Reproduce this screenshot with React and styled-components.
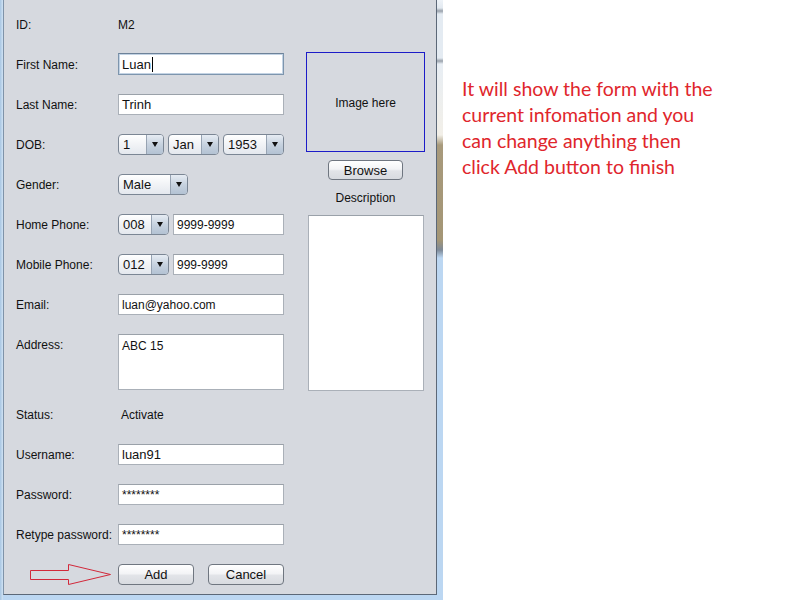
import React from "react";
import styled, { createGlobalStyle } from "styled-components";

const Global = createGlobalStyle`
  html, body { margin: 0; padding: 0; background: #fff; }
  body { font-family: "Liberation Sans", Arial, sans-serif; font-size: 12px; color: #111; }
`;

const Page = styled.div`
  display: flex;
  width: 800px;
  height: 600px;
  background: #fff;
  overflow: hidden;
`;

const Frame = styled.div`
  box-sizing: border-box;
  width: 443px;
  height: 600px;
  display: flex;
  padding: 0 6px 5px 3px;
  background:
    linear-gradient(to bottom, #eef3f8 0, #e2e9f0 8px, #9aa2ac 11px, #e4ebf2 14px, #e4ebf2 58px, #9aa2ac 61px, #e8eef4 64px, #f2efe8 135px, #a89a7c 145px, #a49676 240px, #7e8a98 250px, #bcd7f2 258px, #bcd7f2 100%) right top / 6px 100% no-repeat,
    linear-gradient(to right, #a8c6e2, #cfe2f4) left top / 3px 100% no-repeat,
    #bcd7f2;
`;

const Panel = styled.div`
  flex: 1;
  display: flex;
  box-sizing: border-box;
  background: #d6d9df;
  border-left: 1px solid #7f93a8;
  border-right: 1px solid #5c6878;
  border-bottom: 1px solid #5c6878;
  padding: 4px 0 0 12px;
`;

const FormCol = styled.div`
  display: flex;
  flex-direction: column;
  width: 268px;
`;

const Row = styled.div`
  display: flex;
  align-items: ${(p) => (p.$top ? "flex-start" : "center")};
  height: ${(p) => p.$h || 40}px;
  box-sizing: border-box;
  padding-top: ${(p) => (p.$top ? 10 : 0)}px;
`;

const Label = styled.div`
  width: 102px;
  flex: none;
  line-height: 14px;
  padding-top: ${(p) => (p.$top ? 4 : 2)}px;
`;

const Value = styled.div`
  padding-left: ${(p) => p.$pad || 0}px;
  padding-top: 2px;
  line-height: 14px;
`;

const Controls = styled.div`
  display: flex;
  gap: 4px;
  width: 166px;
`;

const Input = styled.div`
  box-sizing: border-box;
  width: ${(p) => p.$w || 166}px;
  height: ${(p) => p.$h || 21}px;
  background: #fff;
  border: 1px solid ${(p) => (p.$focus ? "#7d95ad" : "#aab0b8")};
  border-top-color: ${(p) => (p.$focus ? "#6d8299" : "#9aa1a9")};
  box-shadow: ${(p) => (p.$focus ? "inset 0 0 0 1px #c3d3e4" : "none")};
  padding: ${(p) => (p.$multi ? "4px 3px" : "1px 3px 0")};
  display: flex;
  align-items: ${(p) => (p.$multi ? "flex-start" : "center")};
  font-size: ${(p) => (p.$big ? 13 : 12)}px;
  line-height: 14px;
  color: #111;
`;

const Caret = styled.span`
  display: inline-block;
  width: 1px;
  height: 15px;
  background: #000;
  margin-left: 1px;
`;

const Combo = styled.div`
  box-sizing: border-box;
  width: ${(p) => p.$w}px;
  height: 21px;
  flex: none;
  display: flex;
  border: 1px solid #7b8694;
  border-radius: 4px;
  overflow: hidden;
  background: linear-gradient(to bottom, #ffffff, #f1f3f6 50%, #e4e8ee);
`;

const ComboText = styled.div`
  flex: 1;
  display: flex;
  align-items: center;
  padding: 1px 0 0 4px;
  font-size: 13px;
`;

const ComboArrow = styled.div`
  width: 16px;
  flex: none;
  border-left: 1px solid #97a3b2;
  background: linear-gradient(to bottom, #e6ecf3, #c7d2df 50%, #b3c2d3);
  display: flex;
  align-items: center;
  justify-content: center;
  &::after {
    content: "";
    border-left: 3.5px solid transparent;
    border-right: 3.5px solid transparent;
    border-top: 5px solid #111;
  }
`;

const Button = styled.div`
  box-sizing: border-box;
  width: ${(p) => p.$w}px;
  height: ${(p) => p.$h || 21}px;
  border: 1px solid #6f7680;
  border-radius: 4px;
  background: linear-gradient(to bottom, #ffffff, #f3f4f6 45%, #e2e4e8 55%, #d8dbe0);
  display: flex;
  align-items: center;
  justify-content: center;
  font-size: 13px;
  color: #111;
`;

const Buttons = styled.div`
  display: flex;
  gap: 14px;
`;

const ArrowCell = styled.div`
  width: 102px;
  flex: none;
  display: flex;
  padding-left: 14px;
  box-sizing: border-box;
  padding-top: 2px;
`;

const SideCol = styled.div`
  width: 119px;
  margin-left: 22px;
  padding-top: 48px;
  display: flex;
  flex-direction: column;
  align-items: center;
`;

const ImageBox = styled.div`
  box-sizing: border-box;
  width: 119px;
  height: 100px;
  border: 1px solid #1c1cc8;
  display: flex;
  align-items: center;
  justify-content: center;
  padding-top: 2px;
`;

const SideGap = styled.div`
  height: ${(p) => p.$h}px;
  flex: none;
`;

const Caption = styled.div`
  line-height: 14px;
`;

const DescBox = styled.div`
  box-sizing: border-box;
  width: 116px;
  height: 176px;
  background: #fff;
  border: 1px solid #aab0b8;
  border-top-color: #9aa1a9;
`;

const Note = styled.div`
  padding: 76px 0 0 19px;
  font-family: Lato, "Open Sans", sans-serif;
  font-size: 19.5px;
  line-height: 26px;
  color: #e0262c;
`;

const SelectBox = ({ w, value }) => (
  <Combo $w={w}>
    <ComboText>{value}</ComboText>
    <ComboArrow />
  </Combo>
);

export default function App() {
  return (
    <Page>
      <Global />
      <Frame>
        <Panel>
          <FormCol>
            <Row>
              <Label>ID:</Label>
              <Value>M2</Value>
            </Row>
            <Row>
              <Label>First Name:</Label>
              <Input $focus $h={22} $big>
                Luan
                <Caret />
              </Input>
            </Row>
            <Row>
              <Label>Last Name:</Label>
              <Input $big>Trinh</Input>
            </Row>
            <Row>
              <Label>DOB:</Label>
              <Controls>
                <SelectBox w={46} value="1" />
                <SelectBox w={51} value="Jan" />
                <SelectBox w={61} value="1953" />
              </Controls>
            </Row>
            <Row>
              <Label>Gender:</Label>
              <SelectBox w={70} value="Male" />
            </Row>
            <Row>
              <Label>Home Phone:</Label>
              <Controls>
                <SelectBox w={51} value="008" />
                <Input $w={111}>9999-9999</Input>
              </Controls>
            </Row>
            <Row>
              <Label>Mobile Phone:</Label>
              <Controls>
                <SelectBox w={51} value="012" />
                <Input $w={111}>999-9999</Input>
              </Controls>
            </Row>
            <Row>
              <Label>Email:</Label>
              <Input>luan@yahoo.com</Input>
            </Row>
            <Row $h={70} $top>
              <Label $top>Address:</Label>
              <Input $multi $h={56}>ABC 15</Input>
            </Row>
            <Row>
              <Label>Status:</Label>
              <Value $pad={3}>Activate</Value>
            </Row>
            <Row>
              <Label>Username:</Label>
              <Input $big>luan91</Input>
            </Row>
            <Row>
              <Label>Password:</Label>
              <Input>********</Input>
            </Row>
            <Row>
              <Label>Retype password:</Label>
              <Input>********</Input>
            </Row>
            <Row>
              <ArrowCell>
                <svg width="82" height="26" viewBox="0 0 82 26">
                  <path
                    d="M0.5 8.5 H38.5 V2.5 L80.5 12.5 L38.5 22.5 V17.5 H0.5 Z"
                    fill="none"
                    stroke="#d2283a"
                    strokeWidth="1"
                  />
                </svg>
              </ArrowCell>
              <Buttons>
                <Button $w={76}>Add</Button>
                <Button $w={76}>Cancel</Button>
              </Buttons>
            </Row>
          </FormCol>
          <SideCol>
            <ImageBox>Image here</ImageBox>
            <SideGap $h={8} />
            <Button $w={75} $h={20}>Browse</Button>
            <SideGap $h={11} />
            <Caption>Description</Caption>
            <SideGap $h={10} />
            <DescBox />
          </SideCol>
        </Panel>
      </Frame>
      <Note>
        It will show the form with the
        <br />
        current infomation and you
        <br />
        can change anything then
        <br />
        click Add button to finish
      </Note>
    </Page>
  );
}
